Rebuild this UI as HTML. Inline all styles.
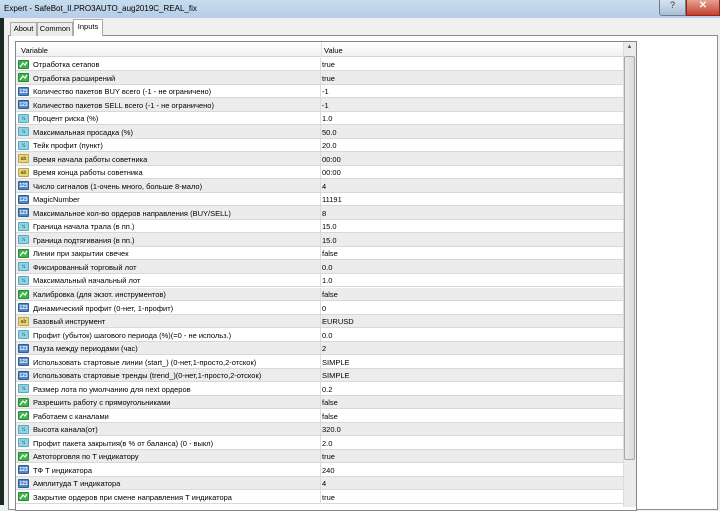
<!DOCTYPE html><html><head><meta charset="utf-8"><style>
*{margin:0;padding:0;box-sizing:border-box}
body{width:720px;height:505px;overflow:hidden;background:#f0f0f0;font-family:"Liberation Sans","Noto Sans CJK SC",sans-serif;font-size:7.5px;color:#000;position:relative}
.abs{position:absolute}
.title{left:0;top:0;width:720px;height:18px;background:linear-gradient(#c9dcef,#b4cde6);}
.title span{position:absolute;left:4px;top:4px;font-size:8px;color:#000}
.row{position:absolute;left:16px;width:607px;height:13.5px;border-bottom:1px solid #d8d8d8}
.row .n{position:absolute;left:17px;top:2.5px;white-space:nowrap}
.row .v{position:absolute;left:306px;top:2.5px}
.row .d{position:absolute;left:304px;top:0;bottom:0;width:1px;background:#dcdcdc}
.ic{position:absolute;left:2px;top:2px;width:11px;height:9px;border-radius:1px;font-size:5px;line-height:8px;text-align:center;font-weight:bold}
.g{background:#3cb54a;border:1px solid #2a8a35}
.i{background:#4f86c6;color:#fff;border:1px solid #2f5f9a}
.d2{background:#8fd4e0;color:#2a6f90;border:1px solid #5aa9c0}
.s{background:#e8d77a;color:#6a5a10;border:1px solid #b9a64a}
.tab{position:absolute;border:1px solid #aaa;border-bottom:none;background:#ececec;font-size:7.5px;text-align:center;line-height:12px}
</style></head><body>
<div class="abs" style="left:0;top:0;width:4px;height:505px;background:#1a2a20"></div>
<div class="abs title"><span>Expert - SafeBot_II.PRO3AUTO_aug2019C_REAL_fix</span></div>
<div class="abs" style="left:659px;top:0;width:27px;height:16px;background:linear-gradient(#d6e3f0,#a9bfd6);border:1px solid #6b7d90;border-top:none;border-radius:0 0 0 3px;text-align:center;font-size:9px;color:#333">?</div>
<div class="abs" style="left:686px;top:0;width:34px;height:16px;background:linear-gradient(#e8a090,#c4402c);border:1px solid #8a2a1c;border-top:none;text-align:center;color:#fff;font-size:10px;font-weight:bold">✕</div>
<div class="abs" style="left:4px;top:18px;width:716px;height:487px;background:#f0f0f0"></div>
<div class="abs" style="left:8px;top:35px;width:710px;height:475px;border:1px solid #8e8f8f;background:#fff"></div>
<div class="tab" style="left:10px;top:22px;width:27px;height:14px">About</div>
<div class="tab" style="left:37px;top:22px;width:36px;height:14px">Common</div>
<div class="tab" style="left:73px;top:19px;width:30px;height:17px;background:#fff;z-index:2;line-height:14px">Inputs</div>
<div class="abs" style="left:15px;top:41px;width:622px;height:470px;border:1px solid #828790;background:#fff"></div>
<div class="abs" style="left:16px;top:42px;width:607px;height:15px;background:linear-gradient(#fff,#f1f2f4);border-bottom:1px solid #d5d5d5"><span class="abs" style="left:5px;top:4px">Variable</span><span class="abs" style="left:305px;top:0;width:1px;height:15px;background:#e0e0e0"></span><span class="abs" style="left:308px;top:4px">Value</span></div>
<div class="abs" style="left:623px;top:42px;width:13px;height:465px;background:#ebebeb;border-left:1px solid #dcdcdc"></div>
<div class="abs" style="left:625px;top:44px;width:9px;height:10px;font-size:6px;color:#555;text-align:center">▲</div>
<div class="abs" style="left:624px;top:56px;width:11px;height:404px;background:linear-gradient(90deg,#e9e9e9,#dcdcdc);border:1px solid #a8a8a8;border-radius:2px"></div>
<div id="rows"></div>
<script>
var R=[["g","Отработка сетапов","true"],["g","Отработка расширений","true"],["i","Количество пакетов BUY  всего (-1 - не ограничено)","-1"],["i","Количество пакетов SELL всего (-1 - не ограничено)","-1"],["d2","Процент риска (%)","1.0"],["d2","Максимальная просадка (%)","50.0"],["d2","Тейк профит (пункт)","20.0"],["s","Время начала работы советника","00:00"],["s","Время конца работы советника","00:00"],["i","Число сигналов (1-очень много, больше 8-мало)","4"],["i","MagicNumber","11191"],["i","Максимальное кол-во ордеров направления (BUY/SELL)","8"],["d2","Граница начала трала (в пп.)","15.0"],["d2","Граница подтягивания (в пп.)","15.0"],["g","Линии при закрытии свечек","false"],["d2","Фиксированный торговый лот","0.0"],["d2","Максимальный начальный лот","1.0"],["g","Калибровка (для экзот. инструментов)","false"],["i","Динамический профит (0-нет, 1-профит)","0"],["s","Базовый инструмент","EURUSD"],["d2","Профит (убыток) шагового периода (%)(=0 - не использ.)","0.0"],["i","Пауза между периодами (час)","2"],["i","Использовать стартовые линии (start_) (0-нет,1-просто,2-отскок)","SIMPLE"],["i","Использовать стартовые тренды (trend_)(0-нет,1-просто,2-отскок)","SIMPLE"],["d2","Размер лота по умолчанию для next ордеров","0.2"],["g","Разрешить работу с прямоугольниками","false"],["g","Работаем с каналами","false"],["d2","Высота канала(от)","320.0"],["d2","Профит пакета закрытия(в % от баланса) (0 - выкл)","2.0"],["g","Автоторговля по Т индикатору","true"],["i","ТФ Т индикатора","240"],["i","Амплитуда Т индикатора","4"],["g","Закрытие ордеров при смене направления Т индикатора","true"]];
var h="";var lab={g:"",i:"123",d2:"½",s:"ab"};
R.forEach(function(r,k){var y=57.5+k*13.53;h+='<div class="row" style="top:'+y+'px;background:'+(k%2?'#ececec':'#fff')+'"><div class="ic '+r[0]+'">'+(r[0]=="g"?'<svg width="9" height="7" style="display:block;margin:0"><path d="M1 6 L4 2 L6 4 L8 1" stroke="#fff" stroke-width="1.2" fill="none"/></svg>':lab[r[0]])+'</div><span class="n">'+r[1]+'</span><span class="d"></span><span class="v">'+r[2]+'</span></div>';});
document.getElementById("rows").innerHTML=h;
</script>
</body></html>
